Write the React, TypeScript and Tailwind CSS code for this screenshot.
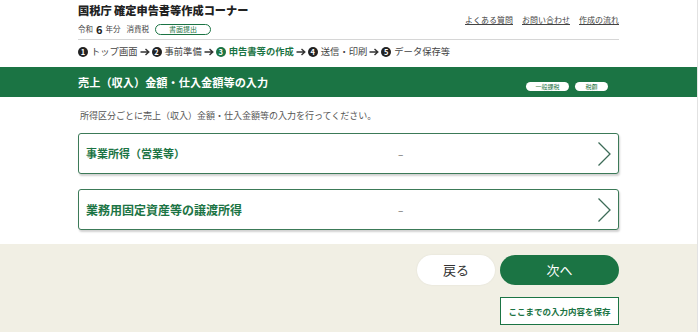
import React from 'react';

const font = { fontFamily: '"Noto Sans CJK JP", "Noto Sans", sans-serif' };

function StepNum({ n, active }: { n: number; active?: boolean }) {
  return (
    <span
      className={`inline-flex items-center justify-center w-[10px] h-[10px] rounded-full text-white text-[7.5px] font-bold leading-none mr-[3px] ${
        active ? 'bg-[#1b7444]' : 'bg-[#222]'
      }`}
    >
      {n}
    </span>
  );
}

function Arrow() {
  return (
    <svg width="10" height="8" viewBox="0 0 10 8" className="mx-[2px]" fill="none">
      <path d="M0.5 4 H8.5 M5.5 1 L8.8 4 L5.5 7" stroke="#333" strokeWidth="1.4" />
    </svg>
  );
}

function Card({ label, size }: { label: string; size: string }) {
  return (
    <div className="h-[41px] flex items-center border-[1.5px] border-[#3c7a58] rounded-[3px] bg-white shadow-[1px_2px_2px_rgba(0,0,0,0.18)] pl-[7px] pr-[6px]">
      <span className={`w-[312px] font-bold text-[#1b7444] ${size}`}>{label}</span>
      <span className="flex-1 text-[10px] text-[#666]">–</span>
      <svg width="15" height="26" viewBox="0 0 15 26" fill="none">
        <path d="M1.5 1.5 L13 13 L1.5 24.5" stroke="#3d6b57" strokeWidth="1.3" />
      </svg>
    </div>
  );
}

export default function App() {
  return (
    <div className="w-[700px] h-[332px] bg-white overflow-hidden text-[#333]" style={font}>
      <div className="w-[698px] h-full border-r border-[#e2e2e2] flex flex-col">
        {/* Header */}
        <div className="ml-[78px] w-[541px] h-[67px] flex flex-col">
          <div className="flex items-start justify-between pt-[3px]">
            <div>
              <div className="text-[11.2px] font-black leading-[15px] text-[#222]">国税庁 確定申告書等作成コーナー</div>
              <div className="flex items-center mt-[5px] text-[7.5px] text-[#444] h-[12px]">
                <span>令和</span>
                <span className="text-[11px] font-bold mx-[3px] text-[#222]">6</span>
                <span>年分</span>
                <span className="ml-[6px]">消費税</span>
                <span className="ml-[6px] px-[13px] h-[11px] leading-[9px] border border-[#1b7444] rounded-full text-[7px] text-[#1b7444]">
                  書面提出
                </span>
              </div>
            </div>
            <div className="flex gap-[9px] text-[8px] text-[#444] underline mt-[11px]">
              <span>よくある質問</span>
              <span>お問い合わせ</span>
              <span>作成の流れ</span>
            </div>
          </div>
          <div className="mt-[4px] border-t border-[#d6d6d6]"></div>
          <div className="flex items-center mt-[5px] text-[9.3px] text-[#444]">
            <StepNum n={1} />
            <span>トップ画面</span>
            <Arrow />
            <StepNum n={2} />
            <span>事前準備</span>
            <Arrow />
            <StepNum n={3} active />
            <span className="font-bold text-[#1b7444]">申告書等の作成</span>
            <Arrow />
            <StepNum n={4} />
            <span>送信・印刷</span>
            <Arrow />
            <StepNum n={5} />
            <span>データ保存等</span>
          </div>
        </div>

        {/* Green banner */}
        <div className="h-[30px] bg-[#1b7444] flex items-center">
          <div className="ml-[78px] w-[541px] flex items-center justify-between">
            <span className="text-white text-[11.2px] font-bold">売上（収入）金額・仕入金額等の入力</span>
            <div className="flex gap-[6px] mt-[9px] mr-[11px]">
              <span className="w-[43px] h-[9px] rounded-full bg-white text-[6px] leading-[9px] text-center text-[#1b7444]">一般課税</span>
              <span className="w-[33px] h-[9px] rounded-full bg-white text-[6px] leading-[9px] text-center text-[#1b7444]">税額</span>
            </div>
          </div>
        </div>

        {/* Body */}
        <div className="ml-[78px] w-[541px] flex-1 flex flex-col">
          <p className="mt-[12px] ml-[2px] text-[9px] text-[#555] leading-[13px]">
            所得区分ごとに売上（収入）金額・仕入金額等の入力を行ってください。
          </p>
          <div className="mt-[11px] flex flex-col gap-[15px]">
            <Card label="事業所得（営業等）" size="text-[11px]" />
            <Card label="業務用固定資産等の譲渡所得" size="text-[12px]" />
          </div>
        </div>

        {/* Footer */}
        <div className="h-[88px] bg-[#f1efe4] flex flex-col">
          <div className="ml-[417px] w-[202px] flex flex-col items-end pt-[11px]">
            <div className="flex gap-[5px]">
              <button className="w-[78px] h-[30px] rounded-full bg-white text-[13px] text-[#333] shadow-[0_0_2px_rgba(0,0,0,0.08)]">戻る</button>
              <button className="w-[119px] h-[30px] rounded-full bg-[#1b7444] text-[13px] text-white">次へ</button>
            </div>
            <button className="mt-[12px] w-[119px] h-[28px] bg-white border-[1.5px] border-[#1b7444] text-[8.5px] font-bold text-[#1b7444]">
              ここまでの入力内容を保存
            </button>
          </div>
        </div>
      </div>
    </div>
  );
}
